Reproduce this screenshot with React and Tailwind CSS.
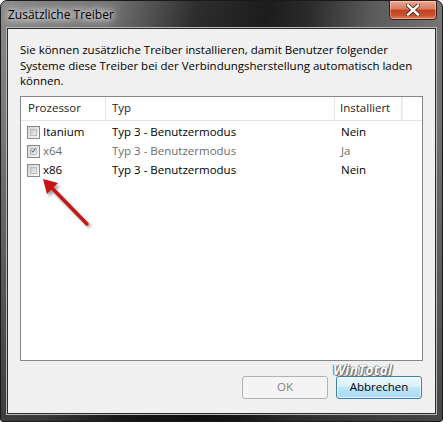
import React from 'react';

const rows = [
    { cpu: 'Itanium', typ: 'Typ 3 - Benutzermodus', inst: 'Nein', checked: false, disabled: false },
    { cpu: 'x64', typ: 'Typ 3 - Benutzermodus', inst: 'Ja', checked: true, disabled: true },
    { cpu: 'x86', typ: 'Typ 3 - Benutzermodus', inst: 'Nein', checked: false, disabled: false },
];

const CheckBox = ({ checked, disabled }) => (
    <span className="w-[13px] h-[13px] border border-[#8a8a8a] bg-[linear-gradient(135deg,#d6d6d6,#f7f7f7)] p-[2px] flex items-center justify-center shrink-0">
        <span className="w-full h-full border border-[#bcbcbc] bg-[linear-gradient(135deg,#c8c8c8,#f2f2f2)] flex items-center justify-center">
            {checked && (
                <svg width="9" height="9" viewBox="0 0 9 9" className="-mt-[1px]">
                    <path d="M1 4.5 L3.5 7.5 L8 0.5" fill="none" stroke={disabled ? '#4f5f86' : '#1f3f8f'} strokeWidth="1.7" />
                </svg>
            )}
        </span>
    </span>
);

const Arrow = () => (
    <svg className="absolute left-[36px] top-[172px]" width="64" height="64" viewBox="0 0 64 64">
        <defs>
            <filter id="sh" x="-30%" y="-30%" width="160%" height="160%">
                <feGaussianBlur stdDeviation="1.6" />
            </filter>
        </defs>
        <g transform="translate(2,3)" opacity="0.45" filter="url(#sh)">
            <line x1="52" y1="52" x2="16" y2="16" stroke="#333" strokeWidth="3.4" />
            <polygon points="7,7 22,11 11,22" fill="#333" />
        </g>
        <line x1="51" y1="52" x2="15" y2="15" stroke="#c81414" strokeWidth="3.4" strokeLinecap="round" />
        <polygon points="7,7 22,11 11,22" fill="#c81414" />
    </svg>
);

export default function App() {
    return (
        <div className="w-[443px] h-[422px] relative overflow-hidden font-['Open_Sans',sans-serif] text-[11.5px] text-black">
            <div className="absolute inset-0 rounded-t-[7px] rounded-b-[3px] border border-[#1a1a1a] bg-[linear-gradient(180deg,rgba(0,0,0,0)_0%,rgba(0,0,0,0.1)_30%,rgba(0,0,0,0.5)_100%),linear-gradient(100deg,#8a8a8a_0%,#727272_22%,#2e2e2e_38%,#1c1c1c_52%,#2a2a2a_60%,#5a5a5a_72%,#7a7a7a_88%,#8c8c8c_100%)] flex flex-col">
                <div className="h-[27px] flex items-start justify-between shrink-0">
                    <div className="pl-[7px] pt-[6px] text-[12px] leading-[16px] [text-shadow:0_0_6px_#fff,0_0_10px_#fff,0_0_14px_#fff]">
                        Zusätzliche Treiber
                    </div>
                    <div className="mr-[5px] w-[48px] h-[20px] -mt-[1px] rounded-b-[4px] border border-[#3b1d16] bg-[linear-gradient(180deg,#eaa996_0%,#d77a62_45%,#c4401e_50%,#cb522e_80%,#e3845c_100%)] flex items-center justify-center shadow-[inset_0_0_0_1px_rgba(255,255,255,0.35)]">
                        <svg width="14" height="12" viewBox="0 0 14 12">
                            <path d="M2 1.5 L12 10.5 M12 1.5 L2 10.5" stroke="#4a2a20" strokeWidth="4.2" strokeLinecap="square" />
                            <path d="M2 1.5 L12 10.5 M12 1.5 L2 10.5" stroke="#ffffff" strokeWidth="2.4" strokeLinecap="square" />
                        </svg>
                    </div>
                </div>
                <div className="flex-1 mx-[6px] mb-[7px] border border-[#2c2c2c] shadow-[0_0_0_1px_#b8b8b8] bg-[#f0f0f0] flex flex-col px-[12px] pt-[13px]">
                    <p className="leading-[15.5px]">
                        Sie können zusätzliche Treiber installieren, damit Benutzer folgender Systeme diese Treiber bei der Verbindungsherstellung automatisch laden können.
                    </p>
                    <div className="mt-[7px] h-[265px] border border-[#828790] bg-white flex flex-col">
                        <div className="h-[24px] flex border-b border-[#e5e5e5] text-[#1e1e1e] leading-[22px]">
                            <div className="w-[85px] pl-[7px] border-r border-[#e5e5e5]">Prozessor</div>
                            <div className="w-[229px] pl-[6px] border-r border-[#e5e5e5]">Typ</div>
                            <div className="w-[67px] pl-[5px] border-r border-[#e5e5e5]">Installiert</div>
                            <div className="flex-1 border-l border-[#f2f2f2]" />
                        </div>
                        <div className="pt-[2px]">
                            {rows.map((r) => (
                                <div key={r.cpu} className={`h-[19px] flex items-center ${r.disabled ? 'text-[#6d6d6d]' : 'text-black'}`}>
                                    <div className="w-[85px] pl-[6px] flex items-center gap-[3px]">
                                        <CheckBox checked={r.checked} disabled={r.disabled} />
                                        <span>{r.cpu}</span>
                                    </div>
                                    <div className="w-[229px] pl-[6px]">{r.typ}</div>
                                    <div className="w-[67px] pl-[6px]">{r.inst}</div>
                                </div>
                            ))}
                        </div>
                    </div>
                    <div className="mt-[15px] flex justify-end gap-[8px] pr-[1px]">
                        <div className="w-[86px] h-[23px] rounded-[3px] border border-[#adb2b5] bg-[#f4f4f4] text-[#838383] flex items-center justify-center">
                            OK
                        </div>
                        <div className="w-[86px] h-[23px] rounded-[3px] border border-[#3c7fb1] bg-[linear-gradient(180deg,#eaf6fd_0%,#d9f0fc_45%,#bee6fd_50%,#a7d9f5_100%)] shadow-[inset_0_0_0_1px_rgba(255,255,255,0.7)] flex items-center justify-center">
                            Abbrechen
                        </div>
                    </div>
                </div>
            </div>
            <Arrow />
            <div className="absolute left-[333px] top-[362px] text-[13.5px] font-bold italic text-white tracking-[0.3px] [text-shadow:0_0_1px_#555,1px_1px_1px_#666,-1px_0_1px_#777] leading-[16px]">
                WinTotal
            </div>
        </div>
    );
}
